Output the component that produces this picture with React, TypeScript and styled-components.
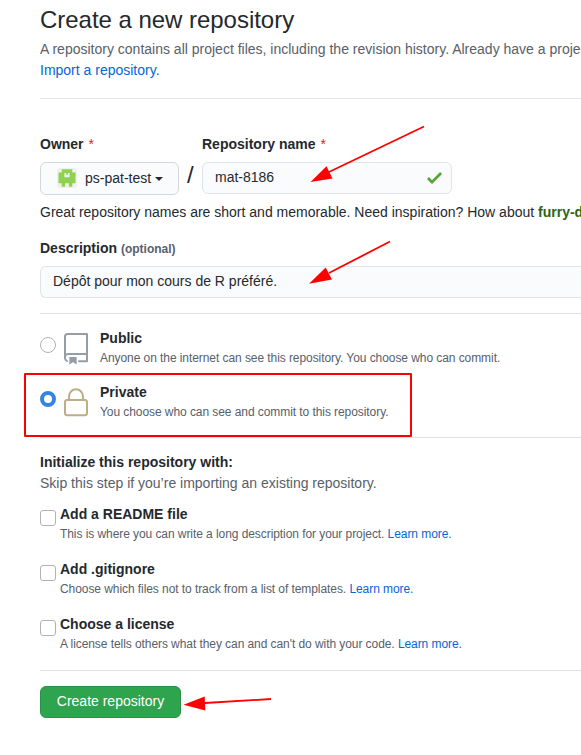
import React from "react";
import styled, { createGlobalStyle } from "styled-components";

const GlobalStyle = createGlobalStyle`
  * { box-sizing: border-box; }
  body {
    margin: 0;
    background: #fff;
    overflow: hidden;
    color: #24292e;
    font: 14px/21px "Liberation Sans", Arial, sans-serif;
  }
`;

const Page = styled.main`
  position: relative;
  width: 581px;
  height: 755px;
  padding: 1px 0 0 40px;
  overflow: hidden;
  white-space: nowrap;
`;

const Title = styled.h1`
  height: 38px;
  margin: 0;
  font-size: 24px;
  font-weight: 400;
  line-height: 37px;
  letter-spacing: -0.03px;
`;

const Muted = styled.p`
  margin: 0;
  color: #586069;
`;

const Link = styled.a`
  color: #0366d6;
  text-decoration: none;
`;

const Rule = styled.hr<{ $top: number; $bottom: number; $color?: string }>`
  height: 1px;
  border: 0;
  margin: ${(p) => p.$top}px 0 ${(p) => p.$bottom}px;
  background: ${(p) => p.$color ?? "#dfe2e5"};
`;

const FieldRow = styled.div`
  display: flex;
`;

const Field = styled.div<{ $width?: number }>`
  display: flex;
  flex-direction: column;
  gap: 7px;
  width: ${(p) => (p.$width ? `${p.$width}px` : "auto")};
`;

const Label = styled.label`
  height: 21px;
  font-weight: 700;
`;

const Required = styled.span`
  margin-left: 1px;
  color: #cb2431;
  font-weight: 400;
`;

const Optional = styled.span`
  color: #586069;
  font-size: 12px;
`;

const OwnerButton = styled.button`
  display: flex;
  align-items: center;
  height: 33px;
  padding: 0 16px 1px;
  border: 1px solid #d5d8db;
  border-radius: 6px;
  background: #fafbfc;
  color: #24292e;
  font: inherit;
`;

const Avatar = styled.svg`
  flex: none;
  width: 20px;
  height: 20px;
  margin-right: 8px;
`;

const Caret = styled.span`
  margin: 1px 0 0 4px;
  border: 4px solid transparent;
  border-top-color: #24292e;
  border-bottom: 0;
`;

const Slash = styled.span`
  width: 23px;
  padding: 30px 0 0 8px;
  font-size: 24px;
  line-height: 21px;
`;

const TextBox = styled.div<{ $open?: boolean }>`
  display: flex;
  align-items: center;
  justify-content: space-between;
  height: 32px;
  padding: 0 9px 2px 12px;
  border: 1px solid #e1e4e8;
  border-right-width: ${(p) => (p.$open ? 0 : 1)}px;
  border-radius: ${(p) => (p.$open ? "6px 0 0 6px" : "6px")};
  background: #fafbfc;
`;

const Check = styled.svg`
  width: 15px;
  height: 12px;
  margin-top: 2px;
`;

const Hint = styled.p`
  margin: 7px 0 15px;
`;

const Suggestion = styled.strong`
  color: #2c6513;
`;

const Option = styled.div<{ $gap: number }>`
  display: flex;
  height: 39px;
  margin-bottom: ${(p) => p.$gap}px;
`;

const Radio = styled.span<{ $checked?: boolean }>`
  width: 16px;
  height: 16px;
  margin: 9px 4px 0 0;
  border: ${(p) => (p.$checked ? "4px solid #3584e4" : "1px solid #b6b1ac")};
  border-radius: 50%;
  background: #fff;
`;

const OptionIcon = styled.svg`
  width: 32px;
  height: 32px;
  margin: 5px 8px 0 0;
`;

const Checkbox = styled.span`
  width: 16px;
  height: 16px;
  margin: 6px 4px 0 0;
  border: 1px solid #b6b1ac;
  border-radius: 3px;
  background: #fff;
`;

const OptionTitle = styled.div`
  font-weight: 700;
`;

const OptionNote = styled.div`
  color: #586069;
  font-size: 12px;
  line-height: 18px;
  letter-spacing: -0.07px;
`;

const Submit = styled.button`
  display: block;
  width: 141px;
  height: 32px;
  padding: 0 0 1px;
  border: 1px solid #2b9048;
  border-radius: 6px;
  background: #2ea44f;
  color: #fff;
  font: inherit;
`;

const Highlight = styled.div`
  position: absolute;
  left: 24px;
  top: 373px;
  width: 388px;
  height: 64px;
  border: 2px solid #f00;
  border-radius: 1px;
`;

const Arrows = styled.svg`
  position: absolute;
  inset: 0;
  width: 581px;
  height: 755px;
  pointer-events: none;
`;

const initOptions = [
  { title: "Add a README file", note: "This is where you can write a long description for your project." },
  { title: "Add .gitignore", note: "Choose which files not to track from a list of templates." },
  { title: "Choose a license", note: "A license tells others what they can and can't do with your code." },
];

export default function App() {
  return (
    <Page>
      <GlobalStyle />
      <Title>Create a new repository</Title>
      <Muted>A repository contains all project files, including the revision history. Already have a project repository elsewhere?</Muted>
      <Link>Import a repository.</Link>
      <Rule $top={17} $bottom={35} $color="#e1e4e8" />

      <FieldRow>
        <Field $width={139}>
          <Label>Owner <Required>*</Required></Label>
          <OwnerButton>
            <Avatar viewBox="0 0 20 20">
              <rect width="20" height="20" rx="3" fill="#f0f0f0" />
              <path
                fill="#8ed250"
                d="M4.7 1.2h10.6v3.4h3.2v10.6h-3.2v3.6h-3.4v-3.6H8.1v3.6H4.7v-3.6H1.5V4.6h3.2zM7.4 5v4.2h5.2V5h-1.7v1.8H9.1V5z"
              />
            </Avatar>
            ps-pat-test
            <Caret />
          </OwnerButton>
        </Field>
        <Slash>/</Slash>
        <Field $width={250}>
          <Label>Repository name <Required>*</Required></Label>
          <TextBox>
            mat-8186
            <Check viewBox="0 0 12 9.5">
              <path fill="#55a532" d="M12 1.5l-8 8-4-4L1.5 4 4 6.5 10.5 0z" />
            </Check>
          </TextBox>
        </Field>
      </FieldRow>
      <Hint>
        Great repository names are short and memorable. Need inspiration? How about <Suggestion>furry-disco</Suggestion>
      </Hint>
      <Field>
        <Label>Description <Optional>(optional)</Optional></Label>
        <TextBox $open>Dépôt pour mon cours de R préféré.</TextBox>
      </Field>

      <Rule $top={15} $bottom={14} />
      <Option $gap={15}>
        <Radio />
        <OptionIcon viewBox="0 0 24 24" fill="#959da5">
          <path
            fillRule="evenodd"
            d="M3 2.75A2.75 2.75 0 015.75 0h14.5a.75.75 0 01.75.75v20.5a.75.75 0 01-.75.75h-6a.75.75 0 010-1.5h5.25v-4H6A1.5 1.5 0 004.5 18v.75c0 .716.43 1.334 1.05 1.605a.75.75 0 01-.6 1.374A3.25 3.25 0 013 18.75v-16zM19.5 1.5V15H6c-.546 0-1.059.146-1.5.401V2.75c0-.69.56-1.25 1.25-1.25H19.5z"
          />
          <path d="M7 18.25a.25.25 0 01.25-.25h5a.25.25 0 01.25.25v5.01a.25.25 0 01-.397.201l-2.206-1.604a.25.25 0 00-.294 0L7.397 23.46a.25.25 0 01-.397-.2v-5.01z" />
        </OptionIcon>
        <div>
          <OptionTitle>Public</OptionTitle>
          <OptionNote>Anyone on the internet can see this repository. You choose who can commit.</OptionNote>
        </div>
      </Option>
      <Option $gap={16}>
        <Radio $checked />
        <OptionIcon viewBox="0 0 24 24" fill="none" stroke="#bdae84" strokeWidth="1.5">
          <rect x="3.75" y="9.75" width="16.5" height="11.5" rx="1.75" />
          <path d="M6.75 9.75V7.25C6.75 4.2 8.9 1.75 12 1.75s5.25 2.45 5.25 5.5v2.5" />
        </OptionIcon>
        <div>
          <OptionTitle>Private</OptionTitle>
          <OptionNote>You choose who can see and commit to this repository.</OptionNote>
        </div>
      </Option>
      <Rule $top={0} $bottom={14} />

      <OptionTitle>Initialize this repository with:</OptionTitle>
      <Muted>Skip this step if you’re importing an existing repository.</Muted>
      <Rule $top={0} $bottom={9} $color="transparent" />
      {initOptions.map((option) => (
        <Option key={option.title} $gap={16}>
          <Checkbox />
          <div>
            <OptionTitle>{option.title}</OptionTitle>
            <OptionNote>{option.note} <Link>Learn more.</Link></OptionNote>
          </div>
        </Option>
      ))}
      <Rule $top={17} $bottom={15} />
      <Submit>Create repository</Submit>

      <Highlight />
      <Arrows viewBox="0 0 581 755" fill="#f00" stroke="#f00">
        <g strokeWidth="1.8">
          <path d="M424 126.5L329 172" />
          <path d="M390 241.5L329 273" />
          <path d="M271 699L205 703" />
        </g>
        <g stroke="none">
          <path d="M310.5 182L326.5 166.3L332.5 178.5z" />
          <path d="M309 283.7L325.7 267.5L332 279.5z" />
          <path d="M183.5 704.7L204.7 696.5L205.3 710.5z" />
        </g>
      </Arrows>
    </Page>
  );
}
